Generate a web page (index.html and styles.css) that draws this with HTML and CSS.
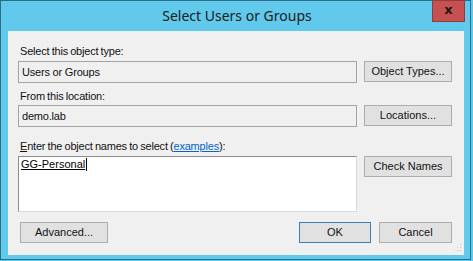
FILE: index.html
```html
<!DOCTYPE html>
<html>
<head>
<meta charset="utf-8">
<link rel="stylesheet" href="styles.css">
</head>
<body>
<div class="window">
  <div class="titlebar">Select Users or Groups</div>
  <div class="close">x</div>
  <div class="content">
    <div class="label l1">Select this object type:</div>
    <div class="row">
      <div class="field">Users or Groups</div>
      <div class="btn">Object Types...</div>
    </div>
    <div class="label l2">From this location:</div>
    <div class="row">
      <div class="field">demo.lab</div>
      <div class="btn">Locations...</div>
    </div>
    <div class="label l3"><u>E</u>nter the object names to select (<a class="link">examples</a>):</div>
    <div class="row">
      <div class="area"><span class="name">GG-Personal</span></div>
      <div class="btn">Check Names</div>
    </div>
    <div class="bottom">
      <div class="btn adv">Advanced...</div>
      <div class="spacer"></div>
      <div class="btn ok">OK</div>
      <div class="btn cancel">Cancel</div>
    </div>
    <div class="grip"></div>
  </div>
</div>
</body>
</html>
```

FILE: styles.css
```css
html, body {
  margin: 0;
  padding: 0;
  background: #61c9ec;
}
.window {
  position: relative;
  box-sizing: border-box;
  width: 471px;
  height: 260px;
  border: 1px solid #2e6b84;
  background: #61c9ec;
  padding: 0 6px 4px 7px;
  font-family: "Liberation Sans", Arial, sans-serif;
  font-size: 11px;
  color: #000;
}
.titlebar {
  height: 30px;
  line-height: 30px;
  text-align: center;
  font-family: "Noto Sans", "Open Sans", sans-serif;
  font-size: 14px;
  color: #1b1b1b;
  padding-left: 2px;
}
.close {
  position: absolute;
  left: 431px;
  top: -1px;
  width: 31px;
  height: 20px;
  background: #c75050;
  border: 1px solid #8e3d3d;
  color: #1a1a1a;
  font-family: "DejaVu Sans", sans-serif;
  font-weight: bold;
  font-size: 13px;
  line-height: 18px;
  text-align: center;
}
.content {
  position: relative;
  height: 224px;
  box-sizing: border-box;
  background: #f0f0f0;
  padding: 0 12px 0 10px;
  display: flex;
  flex-direction: column;
}
.label {
  line-height: 16px;
  padding-left: 2px;
  white-space: nowrap;
  letter-spacing: -0.2px;
  word-spacing: -0.6px;
  color: #111;
}
.l1 { padding-top: 12px; box-sizing: border-box; height: 30px; }
.l2 { padding-top: 5px; height: 22px; box-sizing: border-box; }
.l3 { padding-top: 11px; height: 29px; box-sizing: border-box; }
.link {
  color: #0066cc;
  text-decoration: underline;
}
.row {
  display: flex;
  align-items: flex-start;
  gap: 7px;
}
.field {
  box-sizing: border-box;
  width: 339px;
  height: 22px;
  border: 1px solid #a3a3a3;
  background: #f0f0f0;
  line-height: 20px;
  padding-left: 3px;
  letter-spacing: -0.2px;
  color: #111;
}
.area {
  box-sizing: border-box;
  width: 339px;
  height: 56px;
  background: #fff;
  border: 1px solid #dadada;
  border-top-color: #8c8c8c;
  border-left-color: #8c8c8c;
  padding: 1px 0 0 2px;
  line-height: 13px;
}
.name {
  display: inline-block;
  text-decoration: underline;
  border-right: 1px solid #000;
  padding-right: 1px;
  line-height: 13px;
}
.btn {
  box-sizing: border-box;
  width: 88px;
  height: 21px;
  background: #e1e1e1;
  border: 1px solid #adadad;
  text-align: center;
  line-height: 19px;
  white-space: nowrap;
  color: #111;
}
.bottom {
  display: flex;
  margin-top: 10px;
  padding-left: 2px;
}
.spacer { flex: 1; }
.ok {
  width: 72px;
  border-color: #3c7fb1;
  margin-right: 8px;
}
.cancel { width: 73px; }
.grip {
  position: absolute;
  right: 2px;
  bottom: 3px;
  width: 9px;
  height: 9px;
  background-image: radial-gradient(circle, #b9b9b9 0.8px, transparent 1px);
  background-size: 3px 3px;
  clip-path: polygon(100% 0, 100% 100%, 0 100%);
}
```
